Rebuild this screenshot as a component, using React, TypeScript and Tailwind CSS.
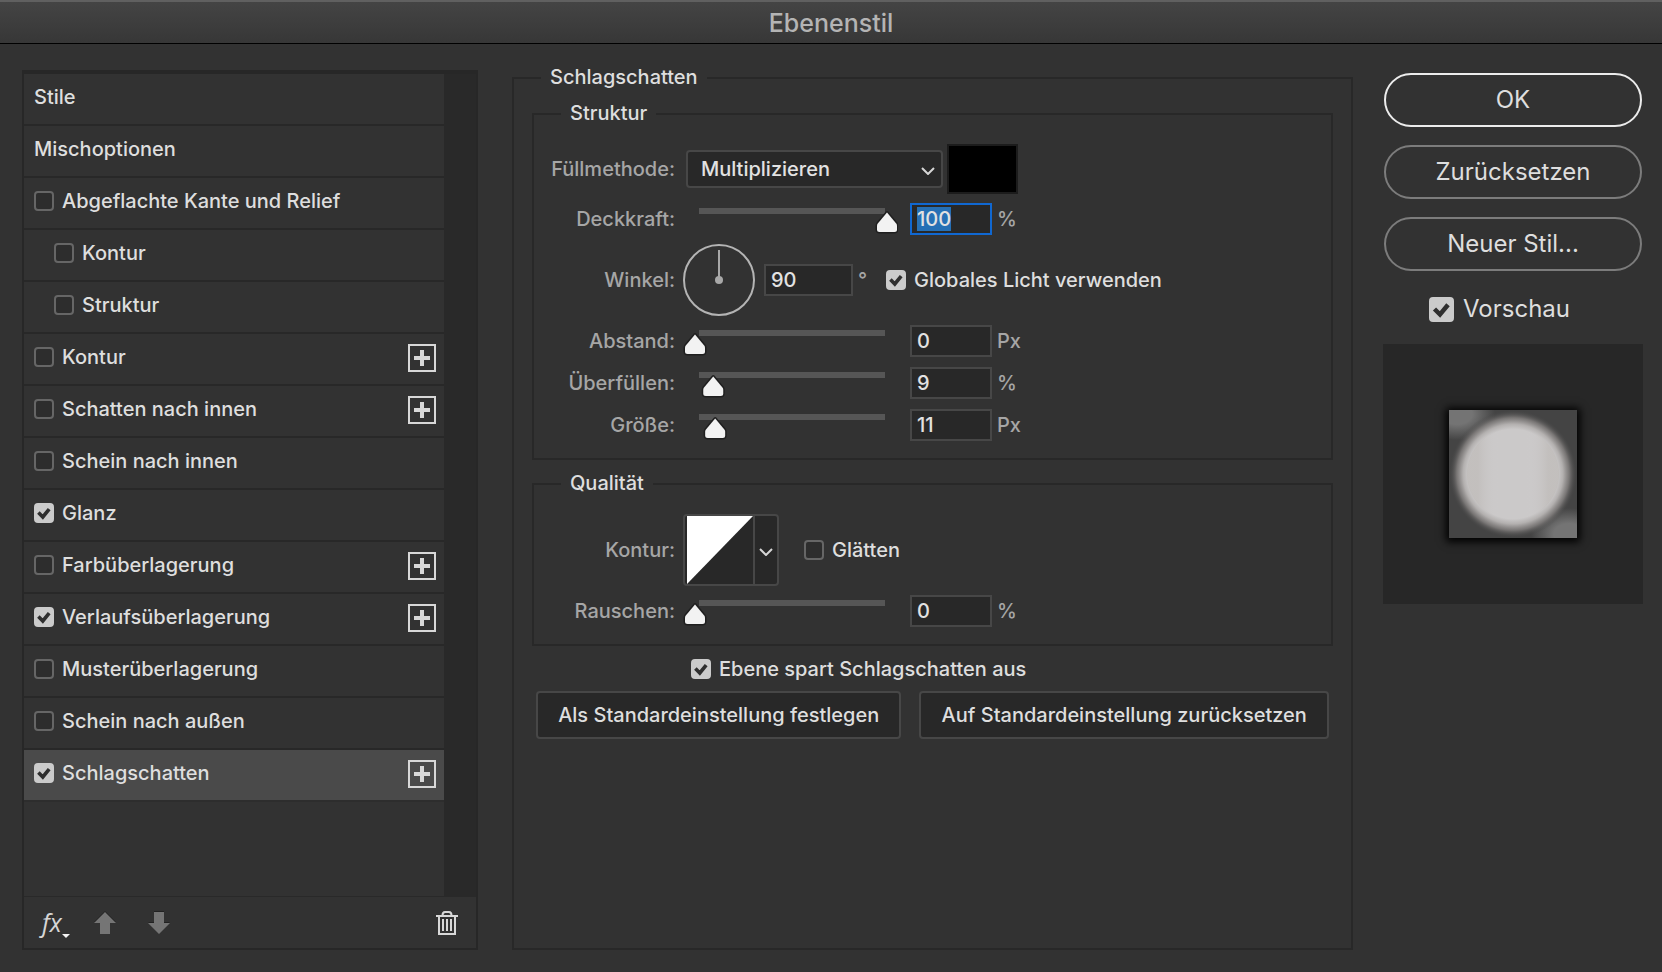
import { useEffect, useRef, useState } from 'react';
import type { ReactNode } from 'react';

type Effect = { id: string; name: string; checked?: boolean; child?: boolean; plus?: boolean; active?: boolean };

const effects: Effect[] = [
  { id: 'relief', name: 'Abgeflachte Kante und Relief' },
  { id: 'relief-kontur', name: 'Kontur', child: true },
  { id: 'relief-struktur', name: 'Struktur', child: true },
  { id: 'kontur', name: 'Kontur', plus: true },
  { id: 'schatten-innen', name: 'Schatten nach innen', plus: true },
  { id: 'schein-innen', name: 'Schein nach innen' },
  { id: 'glanz', name: 'Glanz', checked: true },
  { id: 'farbe', name: 'Farbüberlagerung', plus: true },
  { id: 'verlauf', name: 'Verlaufsüberlagerung', checked: true, plus: true },
  { id: 'muster', name: 'Musterüberlagerung' },
  { id: 'schein-aussen', name: 'Schein nach außen' },
  { id: 'schlagschatten', name: 'Schlagschatten', checked: true, plus: true, active: true },
];

function Check({ id, checked = false, large = false }: { id: string; checked?: boolean; large?: boolean }) {
  const size = large ? 'size-[25px]' : 'size-5';
  return (
    <span className={`relative block shrink-0 ${size}`}>
      <input
        id={id}
        type="checkbox"
        defaultChecked={checked}
        className="peer block size-full appearance-none rounded border-2 border-[#666] bg-[#2d2d2d] checked:border-[#cbcbcb] checked:bg-[#cbcbcb]"
      />
      <svg viewBox="0 0 20 20" className="pointer-events-none absolute inset-0 hidden size-full peer-checked:block">
        <path d="M4.4 9.6 8.8 14 15.2 6.2" fill="none" stroke="#2f2f2f" strokeWidth="3.6" />
      </svg>
    </span>
  );
}

function Chevron() {
  return (
    <svg viewBox="0 0 14 8" className="h-2 w-[14px]">
      <path d="M1 1l6 6 6-6" fill="none" stroke="#d6d6d6" strokeWidth="2" />
    </svg>
  );
}

function Row({ label, htmlFor, children }: { label: string; htmlFor?: string; children: ReactNode }) {
  return (
    <div className="flex items-center">
      <label htmlFor={htmlFor} className="mr-2 w-[141px] shrink-0 text-right text-[#a6a6a6]">
        {label}
      </label>
      {children}
    </div>
  );
}

const fieldClass =
  'block h-8 border-2 border-[#474747] bg-[#282828] pl-[5px] leading-[26px] text-[#e2e2e2] outline-none selection:bg-[#2670b5] selection:text-[#e2e2e2] focus:border-[#1068d2]';

function SliderRow({ id, label, value, position, unit, focused }: { id: string; label: string; value: string; position: number; unit: string; focused?: boolean }) {
  const [pos, setPos] = useState(position);
  const ref = useRef<HTMLInputElement>(null);

  useEffect(() => {
    if (focused) {
      ref.current?.focus();
      ref.current?.select();
    }
  }, [focused]);

  return (
    <Row label={label} htmlFor={id}>
      <div className="relative mr-3 h-8 w-[215px] shrink-0">
        <svg viewBox="0 0 215 32" className="block h-8 w-[215px]">
          <rect x="16" y="5" width="186" height="6" fill="#565656" />
          <g transform={`translate(${12 + pos * 1.92} 0)`}>
            <path
              d="M0 9.5 9.2 20.5Q10 21.5 10 22.8V26.5Q10 29 7.5 29H-7.5Q-10 29-10 26.5V22.8Q-10 21.5-9.2 20.5Z"
              fill="#f2f2f2"
              stroke="#1f1f1f"
              strokeWidth="3"
              paintOrder="stroke"
              strokeLinejoin="round"
            />
          </g>
        </svg>
        <input
          type="range"
          aria-label={label}
          step="0.5"
          value={pos}
          onChange={(e) => setPos(Number(e.target.value))}
          className="absolute inset-0 size-full opacity-0"
        />
      </div>
      <input ref={ref} id={id} type="text" defaultValue={value} className={`${fieldClass} w-[82px]`} />
      <span className="ml-[5px] text-[#a6a6a6]">{unit}</span>
    </Row>
  );
}

function Group({ title, children }: { title: string; children: ReactNode }) {
  return (
    <fieldset className="border-2 border-[#282828] pb-[17px]">
      <legend className="ml-[27px] px-[9px] pb-px leading-[23px]">{title}</legend>
      <div className="flex flex-col gap-[9px] pt-[18px]">{children}</div>
    </fieldset>
  );
}

function StyleList() {
  return (
    <aside className="mt-1 flex w-[456px] shrink-0 flex-col border-2 border-t-4 border-[#272727]">
      <div className="flex flex-1 bg-[#292929]">
        <ul className="mr-8 flex-1 bg-[#323232]">
          <li className="flex h-[52px] items-center border-b-2 border-[#282828] pb-1 pl-[10px]">Stile</li>
          <li className="flex h-[52px] items-center border-b-2 border-[#282828] pb-1 pl-[10px]">Mischoptionen</li>
          {effects.map((effect) => (
            <li
              key={effect.id}
              className={`flex h-[52px] items-center justify-between border-b-2 pr-2 ${
                effect.active ? 'border-[#2d2d2d] bg-[#4a4a4a] bg-clip-padding' : 'border-[#282828]'
              } ${effect.child ? 'pl-[30px]' : 'pl-[10px]'}`}
            >
              <div className="flex items-center gap-2 pb-1">
                <Check id={effect.id} checked={effect.checked} />
                <label htmlFor={effect.id}>{effect.name}</label>
              </div>
              {effect.plus && (
                <button aria-label={`${effect.name} hinzufügen`} className="mb-[2px] size-7">
                  <svg viewBox="0 0 28 28" className="size-7">
                    <rect x="1" y="1" width="26" height="26" fill="none" stroke="#d8d8d8" strokeWidth="2" />
                    <path d="M14 6v16M6 14h16" stroke="#d8d8d8" strokeWidth="4" />
                  </svg>
                </button>
              )}
            </li>
          ))}
        </ul>
      </div>
      <div className="flex h-[52px] items-center border-t border-[#292929] pr-[18px] pl-[18px]">
        <button aria-label="Effekte" className="flex items-end pb-[2px]">
          <span className="font-['Open_Sans'] text-[25px] leading-8 font-normal text-[#d6d6d6] italic">fx</span>
          <svg viewBox="0 0 8 4" className="h-1 w-2">
            <path d="M0 0h8L4 4z" fill="#f4f4f4" />
          </svg>
        </button>
        <button aria-label="Nach oben" className="ml-[23px]">
          <svg viewBox="0 0 24 24" className="size-6">
            <path d="M12 0 23 11H17V22H7V11H1Z" fill="#222" />
            <path d="M12 1 23 12H17V23H7V12H1Z" fill="#757575" />
          </svg>
        </button>
        <button aria-label="Nach unten" className="ml-[30px]">
          <svg viewBox="0 0 24 24" className="size-6">
            <path d="M7 0H17V11H23L12 22 1 11H7Z" fill="#222" />
            <path d="M7 1H17V12H23L12 23 1 12H7Z" fill="#757575" />
          </svg>
        </button>
        <button aria-label="Löschen" className="ml-auto">
          <svg viewBox="0 0 22 24" className="h-6 w-[22px]" fill="none" stroke="#d8d8d8" strokeWidth="2">
            <path d="M0 5h22M3 5v18h16V5M6.500 4.500Q6.500 1 9 1h4q2.500 0 2.500 3.500" />
            <path d="M7 8v12M11 8v12M15 8v12" />
          </svg>
        </button>
      </div>
    </aside>
  );
}

function Preview() {
  return (
    <div className="mt-[19px] flex aspect-square w-full items-center justify-center bg-[#272727]">
      <svg viewBox="0 0 128 128" className="size-32 shadow-[0_1px_8px_3px_#000]">
        <defs>
          <radialGradient id="disc" gradientUnits="userSpaceOnUse" cx="64" cy="64" r="64">
            <stop offset="0.7" stopColor="#cbc9c9" />
            <stop offset="0.78" stopColor="#b3b0af" />
            <stop offset="0.88" stopColor="#7e7b7a" stopOpacity="0.9" />
            <stop offset="1" stopColor="#444" stopOpacity="0" />
          </radialGradient>
          <linearGradient id="sheen">
            <stop offset="0.12" stopColor="#bdb9b6" stopOpacity="0.6" />
            <stop offset="0.35" stopColor="#cfcdcf" stopOpacity="0" />
            <stop offset="0.65" stopColor="#cfcdcf" stopOpacity="0" />
            <stop offset="0.88" stopColor="#bdb9b6" stopOpacity="0.6" />
          </linearGradient>
          <radialGradient id="corner">
            <stop offset="0.4" stopColor="#747474" />
            <stop offset="1" stopColor="#444" />
          </radialGradient>
        </defs>
        <rect width="128" height="128" fill="#444" />
        <ellipse cx="8" cy="4" rx="38" ry="26" fill="url(#corner)" />
        <ellipse cx="120" cy="124" rx="38" ry="26" fill="url(#corner)" />
        <circle cx="64" cy="64" r="64" fill="url(#disc)" />
        <circle cx="64" cy="64" r="46" fill="url(#sheen)" />
      </svg>
    </div>
  );
}

export default function App() {
  return (
    <div className="flex min-h-screen flex-col bg-[#323232] font-[Inter,'Liberation_Sans',sans-serif] text-xl leading-6 font-medium text-[#dedede]">
      <header className="flex h-11 items-center justify-center border-t-2 border-b border-t-[#606060] border-b-black bg-linear-to-b from-[#444] to-[#373737]">
        <h1 className="text-[25px] text-[#b4b4b4]">Ebenenstil</h1>
      </header>

      <main className="flex flex-1 pt-[22px] pr-[19px] pb-[22px] pl-[22px]">
        <StyleList />

        <fieldset className="ml-[34px] min-w-0 flex-1 border-2 border-[#282828] pr-[18px] pl-[18px]">
          <legend className="ml-[9px] px-[9px] pb-px leading-[23px]">Schlagschatten</legend>
          <div className="flex flex-col gap-3 pt-3">
            <Group title="Struktur">
              <Row label="Füllmethode:" htmlFor="fuellmethode">
                <div className="relative ml-[3px] w-[257px]">
                  <select
                    id="fuellmethode"
                    className="block h-[38px] w-full appearance-none rounded border-2 border-[#474747] bg-[#282828] pl-[13px] text-[#e2e2e2]"
                  >
                    <option>Multiplizieren</option>
                    <option>Normal</option>
                  </select>
                  <span className="pointer-events-none absolute inset-y-0 right-2 flex items-center pt-1">
                    <Chevron />
                  </span>
                </div>
                <button aria-label="Schattenfarbe" className="ml-1 h-[50px] w-[71px] border-2 border-[#1c1c1c] bg-black" />
              </Row>
              <SliderRow id="deckkraft" label="Deckkraft:" value="100" position={100} unit="%" focused />
              <Row label="Winkel:" htmlFor="winkel">
                <svg viewBox="0 0 72 72" className="size-[72px] shrink-0">
                  <circle cx="36" cy="36" r="35" fill="none" stroke="#b4b4b4" strokeWidth="2" />
                  <path d="M36 6v30" stroke="#a8a8a8" strokeWidth="2" />
                  <circle cx="36" cy="36" r="4" fill="#a8a8a8" />
                </svg>
                <input id="winkel" type="text" defaultValue="90" className={`${fieldClass} ml-[9px] w-[89px]`} />
                <span className="w-[33px] pl-[5px] text-[#a6a6a6]">°</span>
                <div className="flex items-center gap-2">
                  <Check id="global" checked />
                  <label htmlFor="global">Globales Licht verwenden</label>
                </div>
              </Row>
              <div className="flex flex-col gap-[10px]">
                <SliderRow id="abstand" label="Abstand:" value="0" position={0} unit="Px" />
                <SliderRow id="ueberfuellen" label="Überfüllen:" value="9" position={9.5} unit="%" />
                <SliderRow id="groesse" label="Größe:" value="11" position={10.5} unit="Px" />
              </div>
            </Group>

            <Group title="Qualität">
              <Row label="Kontur:">
                <button aria-label="Kontur" className="flex h-[72px] w-24 rounded border-2 border-[#474747] bg-[#282828] pl-[2px]">
                  <svg viewBox="0 0 66 68" className="h-[68px] w-[66px]">
                    <path d="M0 0H66L0 68Z" fill="#fff" />
                  </svg>
                  <span className="flex h-full flex-1 items-center justify-center border-l-2 border-[#474747] pt-1">
                    <Chevron />
                  </span>
                </button>
                <div className="ml-[25px] flex items-center gap-2">
                  <Check id="glaetten" />
                  <label htmlFor="glaetten">Glätten</label>
                </div>
              </Row>
              <SliderRow id="rauschen" label="Rauschen:" value="0" position={0} unit="%" />
            </Group>
          </div>

          <div className="mt-[11px] flex items-center gap-2 pl-[159px]">
            <Check id="aussparen" checked />
            <label htmlFor="aussparen">Ebene spart Schlagschatten aus</label>
          </div>
          <div className="mt-[10px] flex gap-[18px] px-1">
            <button className="h-12 flex-auto rounded border-2 border-[#474747] bg-[#282828] whitespace-nowrap">
              Als Standardeinstellung festlegen
            </button>
            <button className="h-12 flex-auto rounded border-2 border-[#474747] bg-[#282828] whitespace-nowrap">
              Auf Standardeinstellung zurücksetzen
            </button>
          </div>
        </fieldset>

        <aside className="ml-[30px] w-[260px] shrink-0 pt-[7px] text-2xl font-normal">
          <div className="flex flex-col gap-[18px] px-px">
            <button className="h-[54px] rounded-full border-2 border-[#ececec]">OK</button>
            <button className="h-[54px] rounded-full border-2 border-[#7c7c7c]">Zurücksetzen</button>
            <button className="h-[54px] rounded-full border-2 border-[#7c7c7c]">Neuer Stil...</button>
          </div>
          <div className="mt-[22px] flex items-center gap-[9px] pl-[46px]">
            <Check id="vorschau" checked large />
            <label htmlFor="vorschau">Vorschau</label>
          </div>
          <Preview />
        </aside>
      </main>
    </div>
  );
}
